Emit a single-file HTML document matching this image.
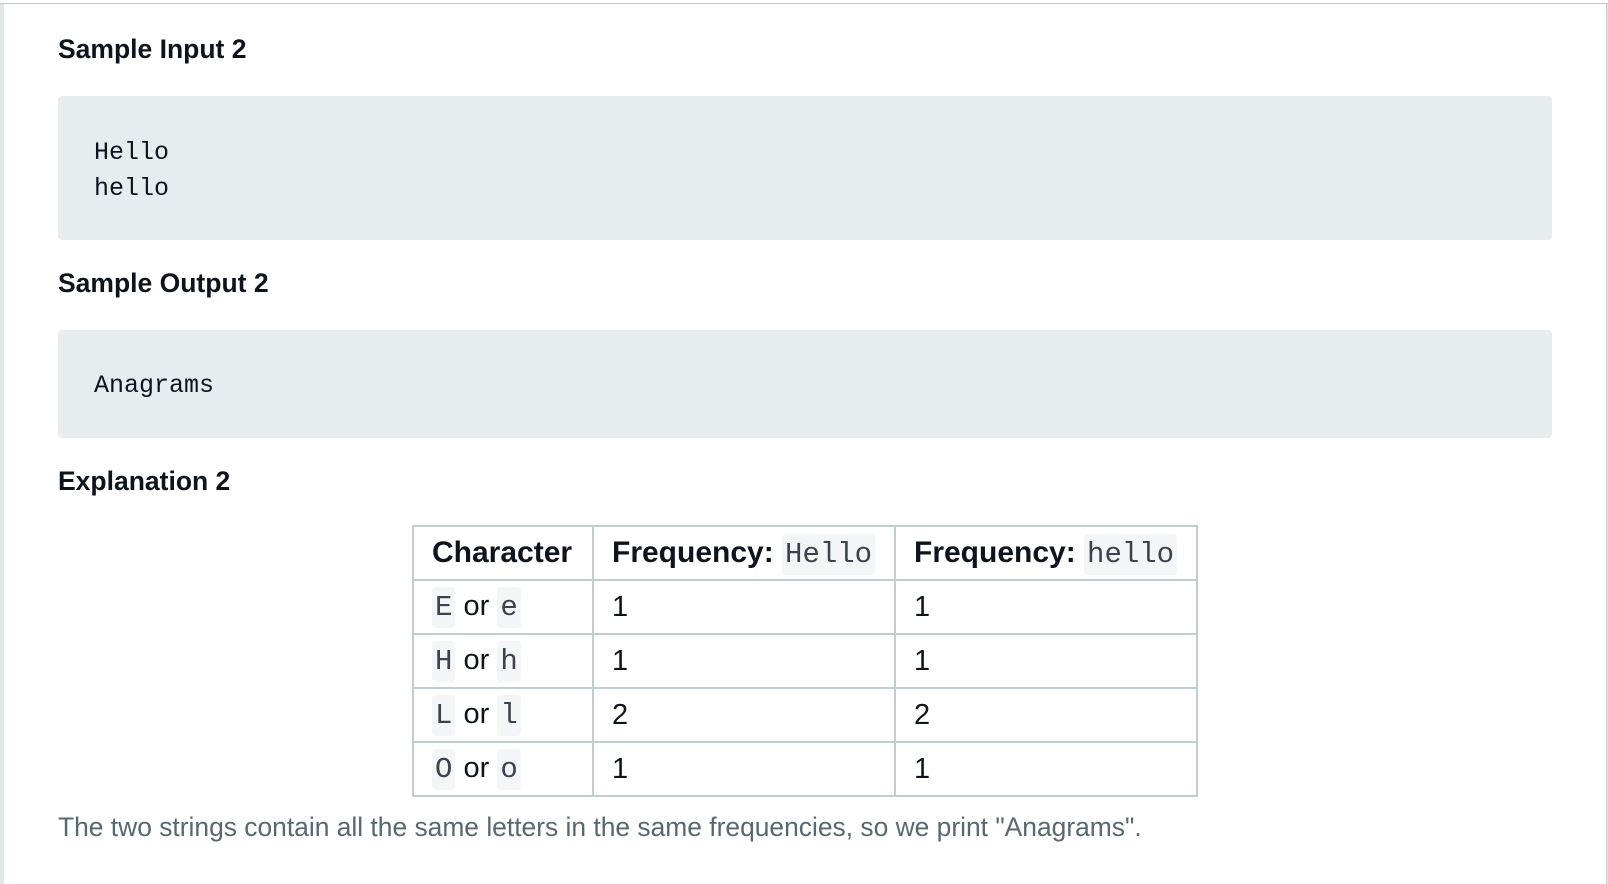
<!DOCTYPE html>
<html><head><meta charset="utf-8"><style>
body{margin:0;width:1608px;height:884px;background:#fff;position:relative;overflow:hidden;font-family:"Liberation Sans",sans-serif;}
.top{position:absolute;left:0;top:3px;width:1608px;height:1px;background:#c4c8ca}
.ls{position:absolute;left:0;top:4px;width:4px;height:880px;background:#e1e7e9}
.rs{position:absolute;left:1606px;top:4px;width:2px;height:880px;background:#dde3e5;border-left:1px solid #c9d0d3}
h3{position:absolute;left:58px;margin:0;font-size:26.5px;font-weight:bold;color:#0e141e;line-height:30px}
.box{position:absolute;left:58px;width:1494px;background:#e7ecef;border-radius:4px;font-family:"Liberation Mono",monospace;font-size:25px;color:#0e141e}
.box div{position:absolute;left:36px;line-height:36px}
table{position:absolute;left:412px;top:525px;border-collapse:collapse;table-layout:fixed;width:784px;font-size:29px;color:#0e141e}
td,th{border:2px solid #c2cdd1;height:52px;padding:0 18px;text-align:left;vertical-align:middle;white-space:nowrap}
th{font-weight:bold;font-size:30px}
code{font-family:"Liberation Mono",monospace;background:#f4f5f6;color:#39424e;border-radius:4px;padding:4px 3px;font-size:29px;font-weight:normal}
p{position:absolute;left:58px;top:812px;margin:0;font-size:26.4px;color:#576871}
</style></head><body>
<div class="top"></div><div class="ls"></div><div class="rs"></div>
<h3 style="top:34px">Sample Input 2</h3>
<div class="box" style="top:96px;height:144px"><div style="top:39px">Hello<br>hello</div></div>
<h3 style="top:268px">Sample Output 2</h3>
<div class="box" style="top:330px;height:108px"><div style="top:38px">Anagrams</div></div>
<h3 style="top:466px">Explanation 2</h3>
<table>
<colgroup><col style="width:180px"><col style="width:302px"><col style="width:302px"></colgroup>
<tr><th>Character</th><th>Frequency: <code>Hello</code></th><th>Frequency: <code>hello</code></th></tr>
<tr><td><code>E</code> or <code>e</code></td><td>1</td><td>1</td></tr>
<tr><td><code>H</code> or <code>h</code></td><td>1</td><td>1</td></tr>
<tr><td><code>L</code> or <code>l</code></td><td>2</td><td>2</td></tr>
<tr><td><code>O</code> or <code>o</code></td><td>1</td><td>1</td></tr>
</table>
<p>The two strings contain all the same letters in the same frequencies, so we print "Anagrams".</p>
</body></html>
